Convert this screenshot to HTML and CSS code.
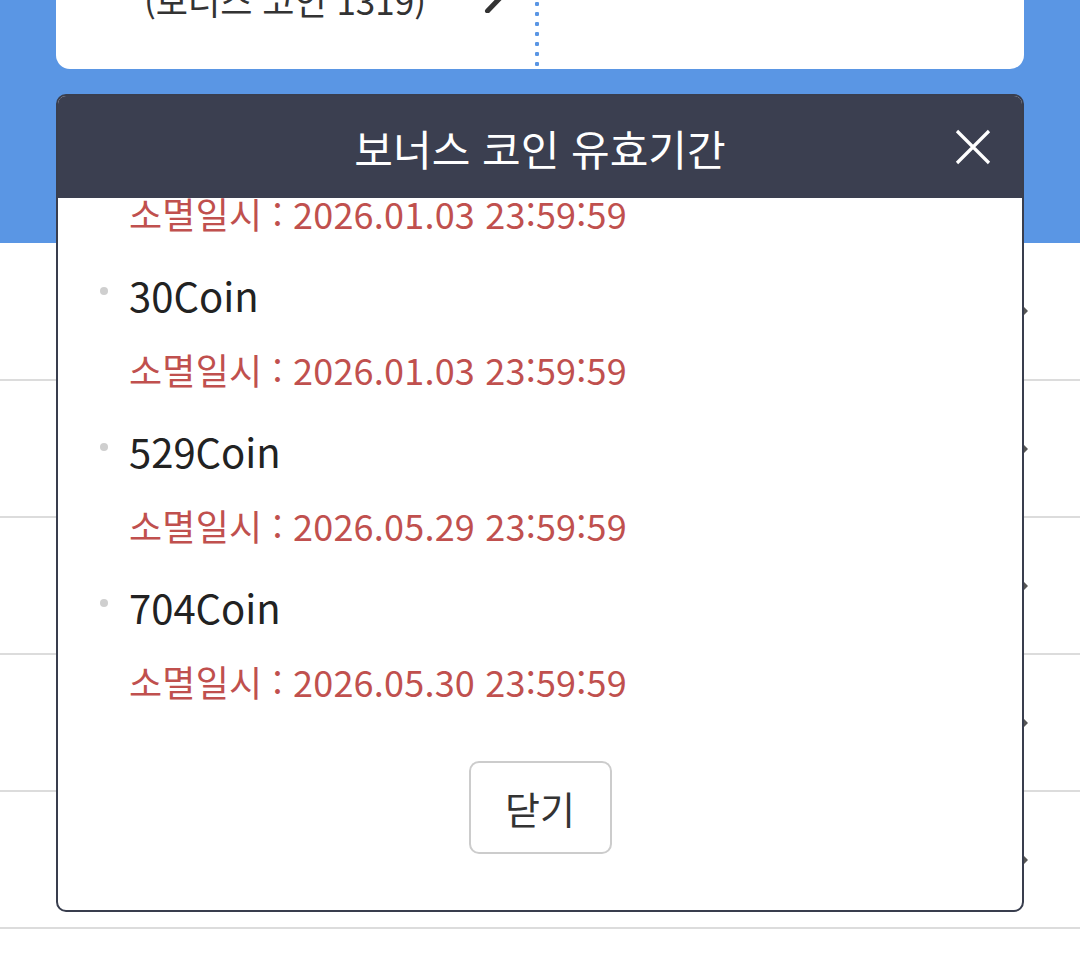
FILE: index.html
```html
<!DOCTYPE html>
<html lang="ko">
<head>
<meta charset="utf-8">
<title>보너스 코인 유효기간</title>
<link rel="stylesheet" href="styles.css">
</head>
<body>
<div class="page">
  <section class="hero">
    <div class="summary-card">
      <div class="summary-left">
        <span class="summary-text">(보너스 코인 1319)</span>
        <svg class="edit-icon" viewBox="0 0 20 14" width="20" height="14"><path d="M3.5 12 L16 -1" stroke="#333" stroke-width="5" stroke-linecap="round" fill="none"/></svg>
      </div>
      <div class="summary-divider"></div>
      <div class="summary-right"></div>
    </div>
  </section>
  <ul class="rows">
    <li class="row"><svg class="chev" viewBox="0 0 14 24" width="14" height="24"><path d="M2 2 L12 12 L2 22" fill="none" stroke="#555" stroke-width="3"/></svg></li>
    <li class="row"><svg class="chev" viewBox="0 0 14 24" width="14" height="24"><path d="M2 2 L12 12 L2 22" fill="none" stroke="#555" stroke-width="3"/></svg></li>
    <li class="row"><svg class="chev" viewBox="0 0 14 24" width="14" height="24"><path d="M2 2 L12 12 L2 22" fill="none" stroke="#555" stroke-width="3"/></svg></li>
    <li class="row"><svg class="chev" viewBox="0 0 14 24" width="14" height="24"><path d="M2 2 L12 12 L2 22" fill="none" stroke="#555" stroke-width="3"/></svg></li>
    <li class="row"><svg class="chev" viewBox="0 0 14 24" width="14" height="24"><path d="M2 2 L12 12 L2 22" fill="none" stroke="#555" stroke-width="3"/></svg></li>
    <li class="row"></li>
  </ul>
</div>

<div class="modal" role="dialog">
  <div class="modal-header">
    <span></span>
    <h2 class="modal-title">보너스 코인 유효기간</h2>
    <button class="close-btn" aria-label="닫기">
      <svg viewBox="0 0 36 36" width="36" height="36"><path d="M2 2 L34 34 M34 2 L2 34" stroke="#fff" stroke-width="3.2" fill="none"/></svg>
    </button>
  </div>
  <div class="modal-body">
    <ul class="coin-list">
      <li class="coin-item">
        <div class="coin-line"><span class="bullet"></span><span class="coin-amount">100Coin</span></div>
        <div class="expire">소멸일시 : 2026.01.03 23:59:59</div>
      </li>
      <li class="coin-item">
        <div class="coin-line"><span class="bullet"></span><span class="coin-amount">30Coin</span></div>
        <div class="expire">소멸일시 : 2026.01.03 23:59:59</div>
      </li>
      <li class="coin-item">
        <div class="coin-line"><span class="bullet"></span><span class="coin-amount">529Coin</span></div>
        <div class="expire">소멸일시 : 2026.05.29 23:59:59</div>
      </li>
      <li class="coin-item">
        <div class="coin-line"><span class="bullet"></span><span class="coin-amount">704Coin</span></div>
        <div class="expire">소멸일시 : 2026.05.30 23:59:59</div>
      </li>
    </ul>
    <div class="modal-actions">
      <button class="btn-close">닫기</button>
    </div>
  </div>
</div>
</body>
</html>
```
FILE: styles.css
```css
* { box-sizing: border-box; }
html, body {
  margin: 0;
  padding: 0;
  background: #fff;
  font-family: "Noto Sans CJK KR", "Noto Sans", sans-serif;
}
.page {
  width: 1080px;
  height: 956px;
  overflow: hidden;
}
.hero {
  height: 243px;
  background: #5a96e4;
}
.summary-card {
  margin: 0 56px;
  height: 69px;
  background: #fff;
  border-radius: 0 0 14px 14px;
  display: flex;
  overflow: hidden;
}
.summary-left {
  width: 479px;
  display: flex;
  align-items: flex-start;
  padding-left: 88px;
}
.summary-text {
  font-size: 35px;
  line-height: 48px;
  margin-top: -24px;
  color: #333;
  white-space: nowrap;
}
.edit-icon {
  margin-left: 58px;
  margin-top: -1px;
}
.summary-divider {
  width: 4px;
  height: 69px;
  background-image: radial-gradient(circle, #5a96e4 2px, transparent 2.4px);
  background-size: 4px 10px;
  background-position: 0 -1px;
}
.summary-right { flex: 1; }

.rows {
  list-style: none;
  margin: 0;
  padding: 0;
}
.row {
  height: 137px;
  border-bottom: 2px solid #dcdcdc;
  display: flex;
  align-items: center;
  justify-content: flex-end;
  padding-right: 52px;
}
.row:first-child { height: 138px; }

.modal {
  position: absolute;
  left: 56px;
  top: 94px;
  width: 968px;
  height: 818px;
  border: 2px solid #393e4e;
  border-radius: 10px;
  background: #fff;
  overflow: hidden;
  display: flex;
  flex-direction: column;
}
.modal-header {
  height: 102px;
  flex: none;
  background: #3b3f50;
  display: grid;
  grid-template-columns: 1fr auto 1fr;
  align-items: center;
}
.modal-title {
  margin: 0;
  font-size: 42px;
  font-weight: 400;
  color: #fff;
  white-space: nowrap;
}
.close-btn {
  justify-self: end;
  margin-right: 31px;
  padding: 0;
  border: 0;
  background: none;
  width: 36px;
  height: 36px;
  display: flex;
}
.modal-body {
  flex: 1;
  overflow: hidden;
  display: flex;
  flex-direction: column;
  justify-content: flex-end;
  padding-bottom: 56px;
}
.coin-list {
  list-style: none;
  margin: 0;
  padding: 0;
}
.coin-item { margin-bottom: 36px; }
.coin-item:last-child { margin-bottom: 0; }
.coin-line {
  display: flex;
  align-items: flex-start;
  height: 48px;
}
.bullet {
  width: 8px;
  height: 8px;
  border-radius: 50%;
  background: #cfcfcf;
  margin: 14px 21px 0 42px;
  flex: none;
}
.coin-amount {
  font-size: 40px;
  line-height: 44px;
  color: #222;
}
.expire {
  margin-top: 24px;
  padding-left: 71px;
  font-size: 36px;
  line-height: 48px;
  letter-spacing: 0.2px;
  color: #c0504e;
  white-space: nowrap;
}
.modal-actions {
  display: flex;
  justify-content: center;
  margin-top: 56px;
}
.btn-close {
  width: 143px;
  height: 93px;
  border: 2px solid #cccccc;
  border-radius: 10px;
  background: #fff;
  font-family: inherit;
  font-size: 38px;
  color: #333;
  padding: 0;
}
```
